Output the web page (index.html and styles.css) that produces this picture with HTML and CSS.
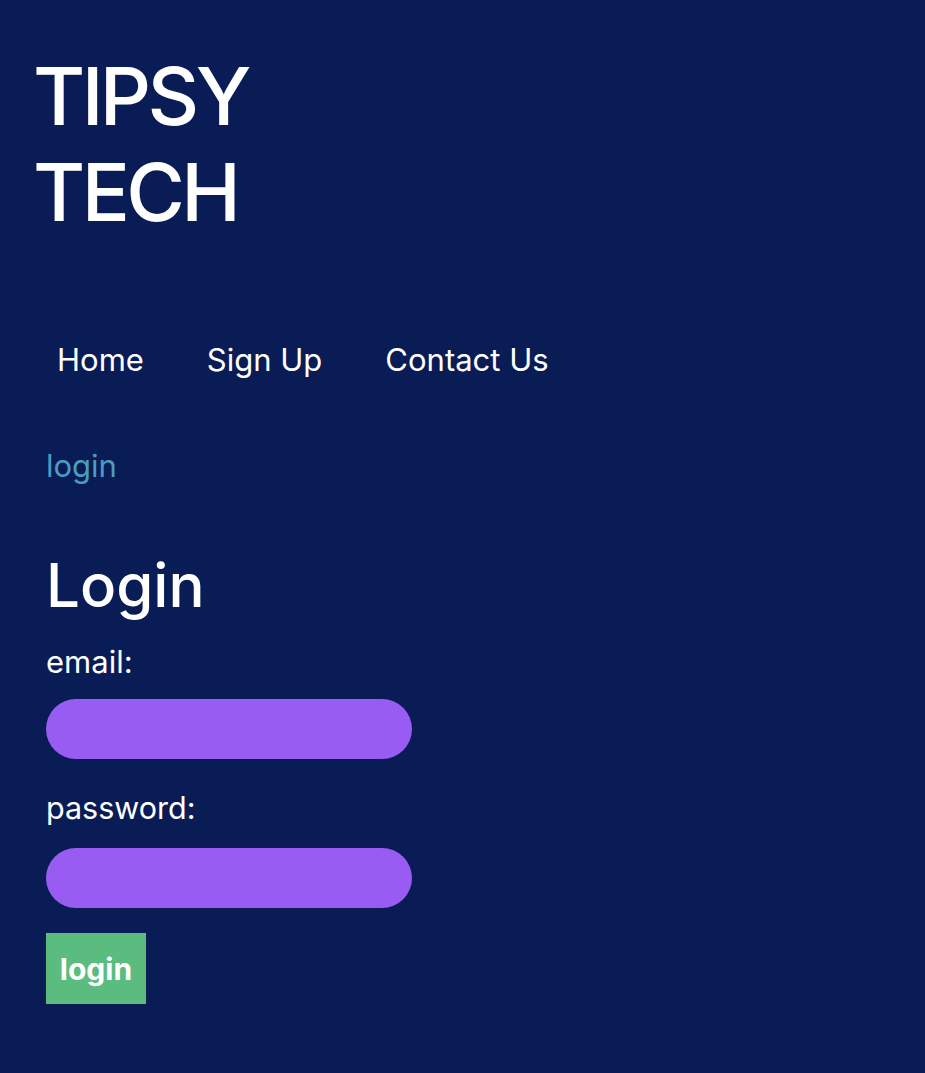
FILE: index.html
```html
<!DOCTYPE html>
<html>
<head>
<meta charset="utf-8">
<link rel="stylesheet" href="styles.css">
</head>
<body>
<header class="site-header">
  <h1 class="brand">TIPSY<br>TECH</h1>
  <nav class="nav">
    <a class="nav-link" href="#">Home</a>
    <a class="nav-link" href="#">Sign Up</a>
    <a class="nav-link" href="#">Contact Us</a>
  </nav>
</header>
<main class="content">
  <a class="crumb" href="#">login</a>
  <h2 class="title">Login</h2>
  <form class="form">
    <label class="label label-email">email:</label>
    <div class="input input-email"></div>
    <label class="label label-password">password:</label>
    <div class="input input-password"></div>
    <button class="btn" type="button">login</button>
  </form>
</main>
</body>
</html>
```
FILE: styles.css
```css
html, body {
  margin: 0;
  padding: 0;
  background: #091c55;
  color: #ffffff;
  font-family: Inter, "Noto Sans", sans-serif;
}
body {
  min-height: 1073px;
}
.site-header {
  padding: 48px 0 0 33px;
}
.brand {
  margin: 0;
  font-size: 80px;
  line-height: 96px;
  font-weight: 500;
  letter-spacing: -0.045em;
}
.nav {
  display: flex;
  gap: 63px;
  margin-top: 100px;
  padding-left: 24px;
}
.nav-link {
  color: #ffffff;
  text-decoration: none;
  font-size: 31px;
  line-height: 40px;
}
.content {
  padding-left: 46px;
  display: flex;
  flex-direction: column;
  align-items: flex-start;
}
.crumb {
  margin-top: 66px;
  color: #4b9dbf;
  text-decoration: none;
  font-size: 31px;
  line-height: 40px;
}
.title {
  margin: 63px 0 0;
  font-size: 60px;
  line-height: 72px;
  font-weight: 500;
}
.form {
  display: flex;
  flex-direction: column;
  align-items: flex-start;
}
.label {
  font-size: 31px;
  line-height: 40px;
}
.label-email {
  margin-top: 21px;
}
.label-password {
  margin-top: 29px;
  font-size: 30.5px;
}
.input {
  width: 366px;
  height: 60px;
  border-radius: 30px;
  background: #995cf2;
  margin-top: 17px;
}
.input-password {
  margin-top: 20px;
}
.btn {
  margin-top: 25px;
  width: 100px;
  height: 71px;
  border: none;
  background: #5abd7f;
  color: #ffffff;
  font-family: Inter, "Noto Sans", sans-serif;
  font-size: 30px;
  font-weight: 700;
  padding: 0;
}
```
